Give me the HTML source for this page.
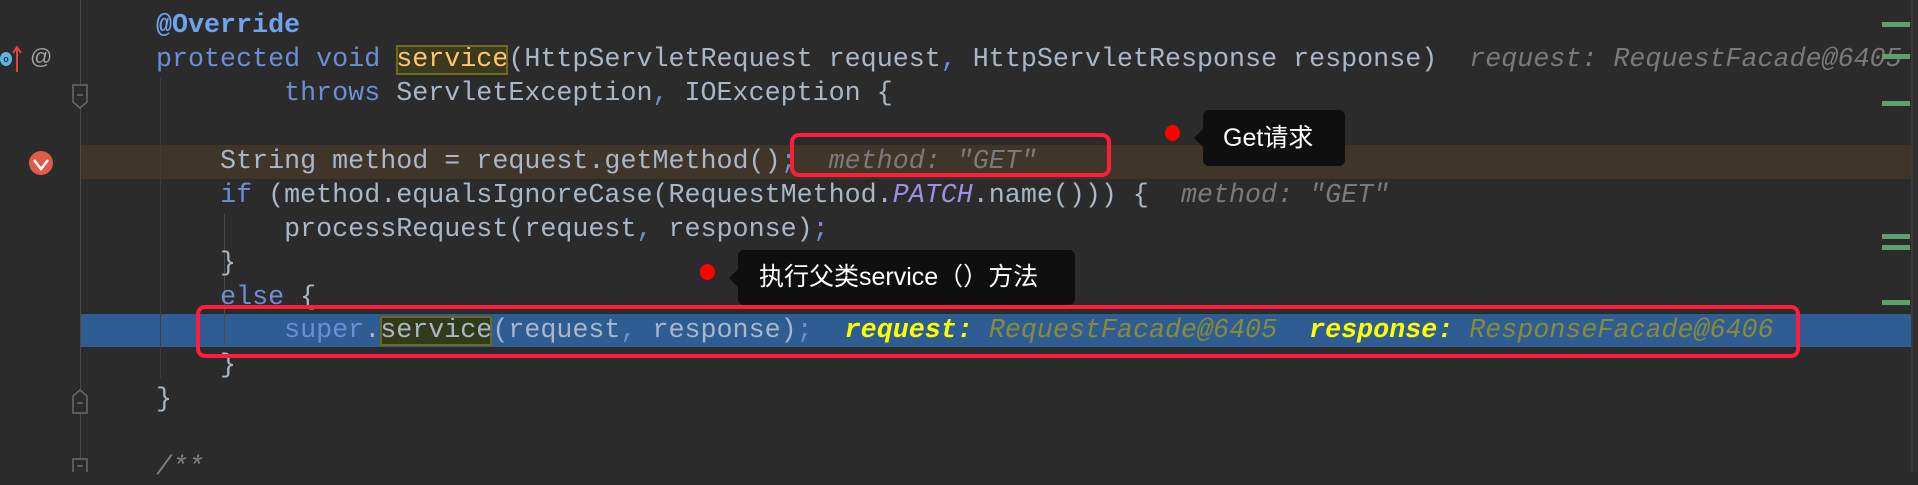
<!DOCTYPE html>
<html><head><meta charset="utf-8"><style>
html,body{margin:0;padding:0;width:1918px;height:472px;overflow:hidden;background:#2b2b2b;}
.c{position:absolute;left:0;top:0;width:1918px;height:472px;}
.ln{position:absolute;left:156px;height:34px;line-height:34px;font-family:"Liberation Mono",monospace;font-size:26.7px;color:#a9b7c6;white-space:pre;}
.k{color:#6b8fd6}
.an{color:#6fa3ee;font-weight:bold}
.m{color:#ffc66d;background:#3b3a1e;outline:2px solid #6b6a1e;outline-offset:-2px}
.m2{color:#a9b7c6;background:#333a1c;outline:2px solid #6b6a1e;outline-offset:-2px}
.h{color:#7a7a7a;font-style:italic}
.it{color:#9d8fe6;font-style:italic}
.hy{color:#ffff00;font-style:italic;font-weight:bold}
.hv{color:#8b8a36;font-style:italic}
.band{position:absolute;left:80px;width:1831px;height:34px;}
.box{position:absolute;border:4px solid #ff1d3b;border-radius:9px;box-sizing:border-box;}
.tip{position:absolute;background:#0f0f0f;border-radius:6px;color:#fff;font-family:"Liberation Sans","Noto Sans CJK SC",sans-serif;}
.tip:before{content:"";position:absolute;left:-9px;top:50%;margin-top:-9px;border:9px solid transparent;border-left:0;border-right:9px solid #0f0f0f;}
.dot{position:absolute;width:15px;height:16px;border-radius:50%;background:#ff0000;}
.g{position:absolute;left:1882px;width:28px;height:5px;background:#5f9e6e;}
</style></head><body><div class="c">
<div class="band" style="top:145px;background:#3f3529"></div>
<div class="band" style="top:314px;height:33px;background:#2e5d94"></div>
<div style="position:absolute;left:80px;top:0;width:1px;height:472px;background:#4a4a4a"></div>
<div style="position:absolute;left:160px;top:78px;width:1px;height:300px;background:#3d3d3d"></div>
<div style="position:absolute;left:224px;top:214px;width:1px;height:130px;background:#4a4a4a"></div>
<div style="position:absolute;left:1911px;top:0;width:2px;height:472px;background:#3a3a3a"></div>
<div style="position:absolute;left:1913px;top:0;width:5px;height:472px;background:#2f2f2f"></div>
<!-- gutter icons -->
<div style="position:absolute;left:0;top:52px;width:12px;height:14px;border-radius:50%;background:#5fb3e0;font:bold 9px 'Liberation Sans',sans-serif;color:#1d3f55;text-align:center;line-height:14px">o</div>
<svg style="position:absolute;left:12px;top:44px" width="10" height="30"><path d="M5 28V4M1 9L5 3L9 9" stroke="#e0443a" stroke-width="2" fill="none"/></svg>
<div style="position:absolute;left:30px;top:44px;font:22px 'Liberation Sans',sans-serif;color:#a0a0a0">@</div>
<svg style="position:absolute;left:28px;top:150px" width="26" height="26"><circle cx="13" cy="13" r="12" fill="#e05a4c"/><path d="M6 10L13 19L20 10" stroke="#fff" stroke-width="2.5" fill="none"/></svg>
<svg style="position:absolute;left:72px;top:84px" width="17" height="26"><path d="M1 1H15V18L8 24L1 18Z" fill="#2b2b2b" stroke="#6a6a6a" stroke-width="1.5"/><path d="M5 11H11" stroke="#6a6a6a" stroke-width="1.5"/></svg>
<svg style="position:absolute;left:72px;top:388px" width="17" height="26"><path d="M1 25H15V8L8 2L1 8Z" fill="#2b2b2b" stroke="#6a6a6a" stroke-width="1.5"/><path d="M5 15H11" stroke="#6a6a6a" stroke-width="1.5"/></svg>
<svg style="position:absolute;left:72px;top:458px" width="17" height="14"><path d="M1 14V1H15V14" fill="#2b2b2b" stroke="#6a6a6a" stroke-width="1.5"/><path d="M5 8H11" stroke="#6a6a6a" stroke-width="1.5"/></svg>
<!-- code -->
<div class="ln" style="top:9px"><span class="an">@Override</span></div>
<div class="ln" style="top:43px"><span class="k">protected void </span><span class="m">service</span>(HttpServletRequest request<span class="k">, </span>HttpServletResponse response)  <span class="h">request: RequestFacade@6405</span></div>
<div class="ln" style="top:77px">        <span class="k">throws </span>ServletException<span class="k">, </span>IOException {</div>
<div class="ln" style="top:145px">    String method = request.getMethod()<span class="k">;</span>  <span class="h">method: "GET"</span></div>
<div class="ln" style="top:179px">    <span class="k">if </span>(method.equalsIgnoreCase(RequestMethod.<span class="it">PATCH</span>.name())) {  <span class="h">method: "GET"</span></div>
<div class="ln" style="top:213px">        processRequest(request<span class="k">, </span>response)<span class="k">;</span></div>
<div class="ln" style="top:247px">    }</div>
<div class="ln" style="top:281px">    <span class="k">else </span>{</div>
<div class="ln" style="top:314px">        <span class="k">super</span>.<span class="m2">service</span>(request<span class="k">, </span>response)<span class="k">;</span>  <span class="hy">request: </span><span class="hv">RequestFacade@6405</span>  <span class="hy">response: </span><span class="hv">ResponseFacade@6406</span></div>
<div class="ln" style="top:349px">    }</div>
<div class="ln" style="top:383px">}</div>
<div class="ln" style="top:451px;color:#808080;font-style:italic">/**</div>
<!-- right markers -->
<div class="g" style="top:22px"></div><div class="g" style="top:54px"></div><div class="g" style="top:101px"></div><div class="g" style="top:234px"></div><div class="g" style="top:245px"></div><div class="g" style="top:300px"></div>
<!-- annotations -->
<div class="box" style="left:790px;top:133px;width:321px;height:44px"></div>
<div class="box" style="left:196px;top:305px;width:1604px;height:53px"></div>
<div class="dot" style="left:1165px;top:125px"></div>
<div class="tip" style="left:1203px;top:110px;width:142px;height:56px;font-size:25px;line-height:56px;text-indent:20px">Get请求</div>
<div class="dot" style="left:700px;top:264px"></div>
<div class="tip" style="left:738px;top:250px;width:337px;height:55px;font-size:25px;line-height:55px;text-indent:21px">执行父类service（）方法</div>
</div></body></html>
